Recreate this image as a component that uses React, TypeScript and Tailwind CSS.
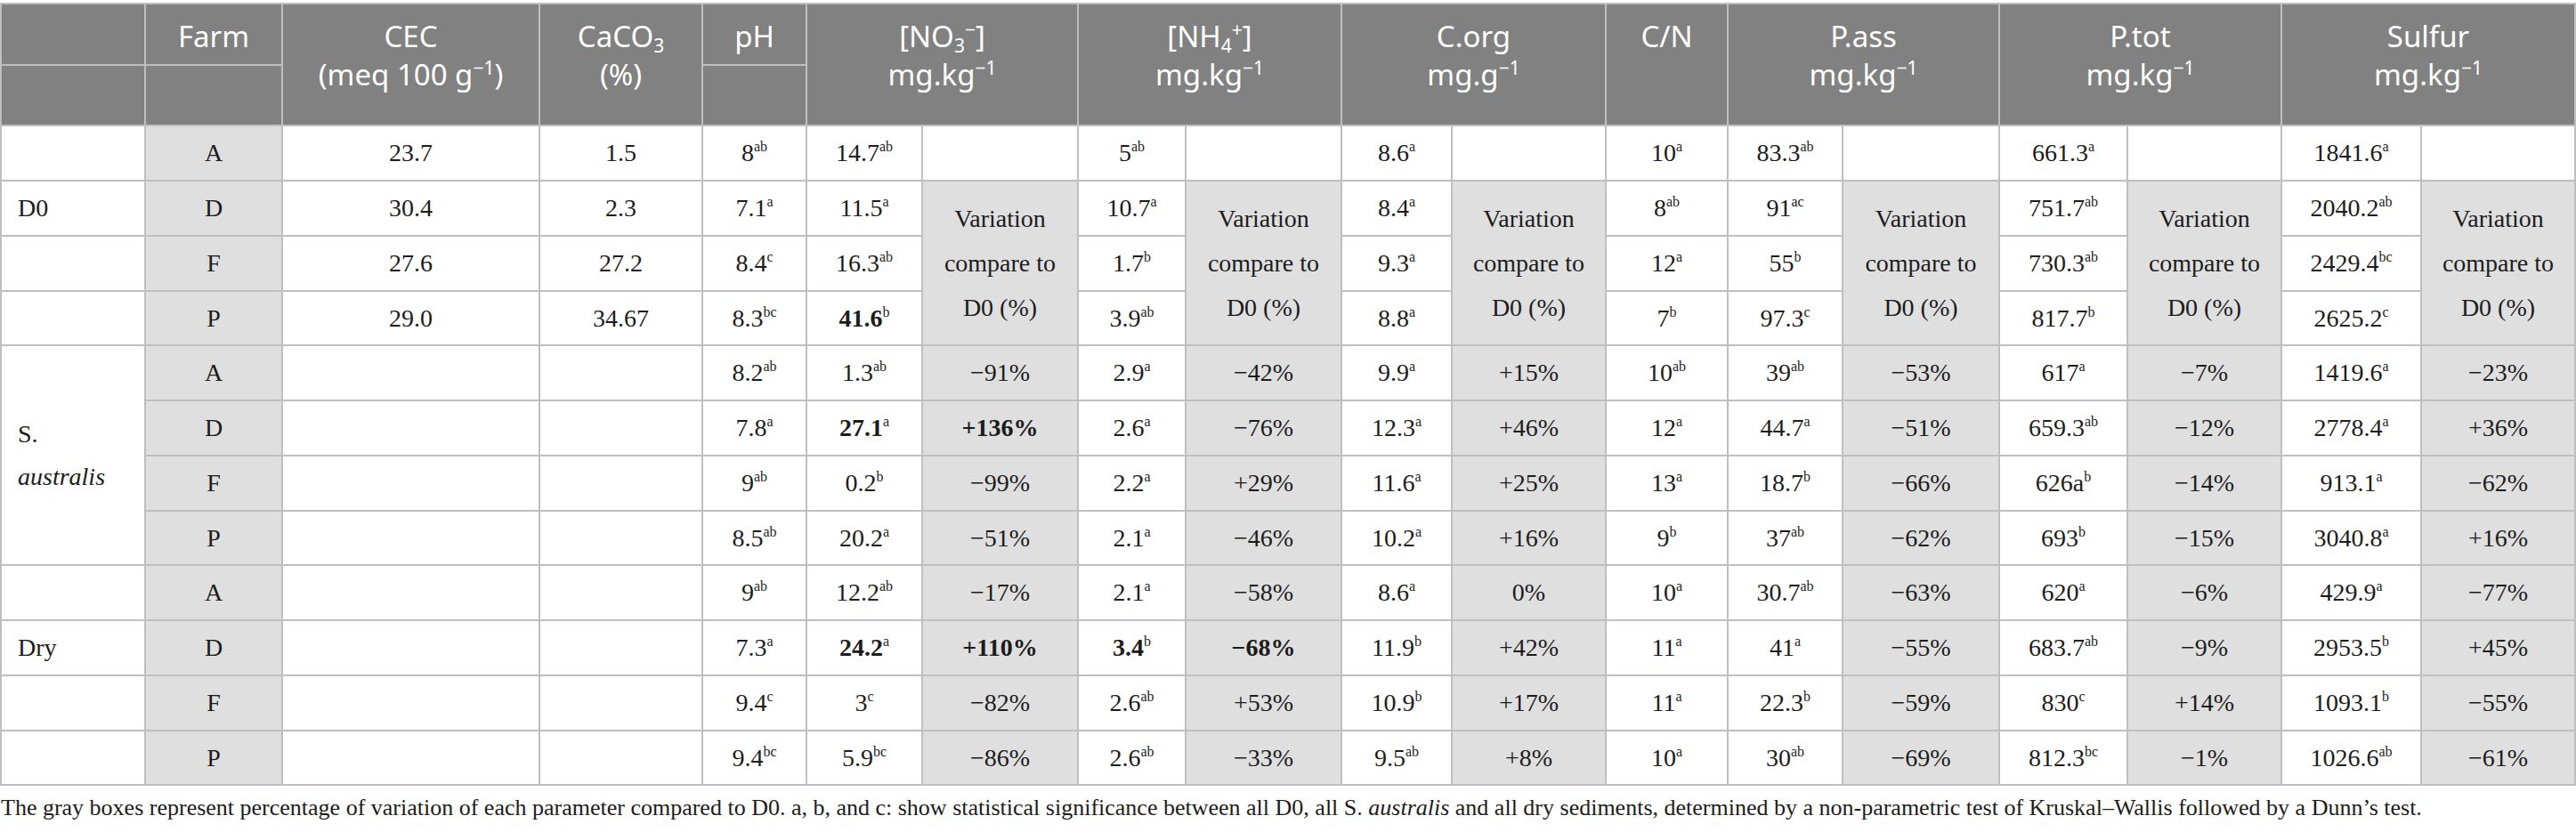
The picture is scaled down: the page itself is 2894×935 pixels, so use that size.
import React from 'react';

type Cell = string;

const d0Rows: { f: string; cec: string; ca: string; vals: Cell[] }[] = [
  { f: 'A', cec: '23.7', ca: '1.5', vals: ['8^ab', '14.7^ab', '5^ab', '8.6^a', '10^a', '83.3^ab', '661.3^a', '1841.6^a'] },
  { f: 'D', cec: '30.4', ca: '2.3', vals: ['7.1^a', '11.5^a', '10.7^a', '8.4^a', '8^ab', '91^ac', '751.7^ab', '2040.2^ab'] },
  { f: 'F', cec: '27.6', ca: '27.2', vals: ['8.4^c', '16.3^ab', '1.7^b', '9.3^a', '12^a', '55^b', '730.3^ab', '2429.4^bc'] },
  { f: 'P', cec: '29.0', ca: '34.67', vals: ['8.3^bc', '*41.6^b', '3.9^ab', '8.8^a', '7^b', '97.3^c', '817.7^b', '2625.2^c'] },
];

const saRows: { f: string; vals: Cell[] }[] = [
  { f: 'A', vals: ['8.2^ab', '1.3^ab', '−91%', '2.9^a', '−42%', '9.9^a', '+15%', '10^ab', '39^ab', '−53%', '617^a', '−7%', '1419.6^a', '−23%'] },
  { f: 'D', vals: ['7.8^a', '*27.1^a', '*+136%', '2.6^a', '−76%', '12.3^a', '+46%', '12^a', '44.7^a', '−51%', '659.3^ab', '−12%', '2778.4^a', '+36%'] },
  { f: 'F', vals: ['9^ab', '0.2^b', '−99%', '2.2^a', '+29%', '11.6^a', '+25%', '13^a', '18.7^b', '−66%', '626a^b', '−14%', '913.1^a', '−62%'] },
  { f: 'P', vals: ['8.5^ab', '20.2^a', '−51%', '2.1^a', '−46%', '10.2^a', '+16%', '9^b', '37^ab', '−62%', '693^b', '−15%', '3040.8^a', '+16%'] },
];

const dryRows: { f: string; vals: Cell[] }[] = [
  { f: 'A', vals: ['9^ab', '12.2^ab', '−17%', '2.1^a', '−58%', '8.6^a', '0%', '10^a', '30.7^ab', '−63%', '620^a', '−6%', '429.9^a', '−77%'] },
  { f: 'D', vals: ['7.3^a', '*24.2^a', '*+110%', '*3.4^b', '*−68%', '11.9^b', '+42%', '11^a', '41^a', '−55%', '683.7^ab', '−9%', '2953.5^b', '+45%'] },
  { f: 'F', vals: ['9.4^c', '3^c', '−82%', '2.6^ab', '+53%', '10.9^b', '+17%', '11^a', '22.3^b', '−59%', '830^c', '+14%', '1093.1^b', '−55%'] },
  { f: 'P', vals: ['9.4^bc', '5.9^bc', '−86%', '2.6^ab', '−33%', '9.5^ab', '+8%', '10^a', '30^ab', '−69%', '812.3^bc', '−1%', '1026.6^ab', '−61%'] },
];

const VAR_IDX = new Set([2, 4, 6, 9, 11, 13]);

function Val({ c }: { c: Cell }) {
  let s = c;
  let bold = false;
  if (s.startsWith('*')) {
    bold = true;
    s = s.slice(1);
  }
  const [main, sup] = s.split('^');
  return (
    <span className="whitespace-nowrap">
      <span className={bold ? 'font-bold' : ''}>{main}</span>
      {sup ? <sup className="text-[16px] font-normal top-[-11px]">{sup}</sup> : null}
    </span>
  );
}

function W({ children, className = '' }: { children?: React.ReactNode; className?: string }) {
  return <div className={`flex items-center justify-center bg-white ${className}`}>{children}</div>;
}

function G({ children, className = '' }: { children?: React.ReactNode; className?: string }) {
  return <div className={`flex items-center justify-center bg-[#e0dfe0] ${className}`}>{children}</div>;
}

function H({ children, className = '' }: { children?: React.ReactNode; className?: string }) {
  return (
    <div className={`flex flex-col items-center justify-start bg-[#808180] pt-[14px] text-white text-[33px] leading-[43px] font-['Noto_Sans',sans-serif] ${className}`}>
      {children}
    </div>
  );
}

const Unit = ({ pre }: { pre: string }) => (
  <span className="whitespace-nowrap">
    {pre}
    <sup className="text-[21px] top-[-12px]">−1</sup>
  </span>
);

function VarNote() {
  return (
    <G className="row-span-3 text-center leading-[50px]">
      <span>
        Variation
        <br />
        compare to
        <br />
        D0 (%)
      </span>
    </G>
  );
}

function TreatRow({ label, f, vals }: { label: React.ReactNode | null; f: string; vals: Cell[] }) {
  return (
    <>
      {label === null ? null : label}
      <G>{f}</G>
      <W />
      <W />
      {vals.map((v, i) =>
        VAR_IDX.has(i) ? (
          <G key={i}>
            <Val c={v} />
          </G>
        ) : (
          <W key={i}>
            <Val c={v} />
          </W>
        )
      )}
    </>
  );
}

export default function App() {
  return (
    <div className="w-[2894px] min-h-[935px] bg-white pt-[3px] text-[#1c1c1c] font-['Liberation_Serif','Times_New_Roman',serif] text-[28px]">
      <div className="grid grid-cols-[160px_152px_287px_181px_115px_128px_173px_119px_173px_122px_171px_135px_127px_174px_142px_171px_155px_171px] grid-rows-[67px_66px_60px_60px_60px_59px_60px_60px_60px_59px_60px_60px_60px_59px] gap-[2px] bg-[#bfbfbf] p-[2px]">
        {/* header row 1 */}
        <H />
        <H>Farm</H>
        <H className="row-span-2">
          <span>CEC</span>
          <span className="whitespace-nowrap">
            (meq 100 g<sup className="text-[21px] top-[-12px]">−1</sup>)
          </span>
        </H>
        <H className="row-span-2">
          <span className="whitespace-nowrap">
            CaCO<sub className="text-[21px] bottom-[-6px]">3</sub>
          </span>
          <span>(%)</span>
        </H>
        <H>pH</H>
        <H className="col-span-2 row-span-2">
          <span className="whitespace-nowrap">
            [NO<sub className="text-[21px] bottom-[-6px]">3</sub>
            <sup className="text-[21px] top-[-12px]">−</sup>]
          </span>
          <Unit pre="mg.kg" />
        </H>
        <H className="col-span-2 row-span-2">
          <span className="whitespace-nowrap">
            [NH<sub className="text-[21px] bottom-[-6px]">4</sub>
            <sup className="text-[21px] top-[-12px]">+</sup>]
          </span>
          <Unit pre="mg.kg" />
        </H>
        <H className="col-span-2 row-span-2">
          <span>C.org</span>
          <Unit pre="mg.g" />
        </H>
        <H className="row-span-2">C/N</H>
        <H className="col-span-2 row-span-2">
          <span>P.ass</span>
          <Unit pre="mg.kg" />
        </H>
        <H className="col-span-2 row-span-2">
          <span>P.tot</span>
          <Unit pre="mg.kg" />
        </H>
        <H className="col-span-2 row-span-2">
          <span>Sulfur</span>
          <Unit pre="mg.kg" />
        </H>
        {/* header row 2 */}
        <H />
        <H />
        <H />

        {/* D0 group */}
        {d0Rows.map((r, ri) => (
          <React.Fragment key={'d0' + ri}>
            {ri === 1 ? <W className="justify-start pl-[18px]">D0</W> : <W />}
            <G>{r.f}</G>
            <W>{r.cec}</W>
            <W>{r.ca}</W>
            <W>
              <Val c={r.vals[0]} />
            </W>
            <W>
              <Val c={r.vals[1]} />
            </W>
            {ri === 0 ? <W /> : ri === 1 ? <VarNote /> : null}
            <W>
              <Val c={r.vals[2]} />
            </W>
            {ri === 0 ? <W /> : ri === 1 ? <VarNote /> : null}
            <W>
              <Val c={r.vals[3]} />
            </W>
            {ri === 0 ? <W /> : ri === 1 ? <VarNote /> : null}
            <W>
              <Val c={r.vals[4]} />
            </W>
            <W>
              <Val c={r.vals[5]} />
            </W>
            {ri === 0 ? <W /> : ri === 1 ? <VarNote /> : null}
            <W>
              <Val c={r.vals[6]} />
            </W>
            {ri === 0 ? <W /> : ri === 1 ? <VarNote /> : null}
            <W>
              <Val c={r.vals[7]} />
            </W>
            {ri === 0 ? <W /> : ri === 1 ? <VarNote /> : null}
          </React.Fragment>
        ))}

        {/* S. australis group */}
        {saRows.map((r, ri) => (
          <TreatRow
            key={'sa' + ri}
            f={r.f}
            vals={r.vals}
            label={
              ri === 0 ? (
                <W className="row-span-4 justify-start pl-[18px] leading-[48px]">
                  <span>
                    S.
                    <br />
                    <i>australis</i>
                  </span>
                </W>
              ) : null
            }
          />
        ))}

        {/* Dry group */}
        {dryRows.map((r, ri) => (
          <TreatRow
            key={'dry' + ri}
            f={r.f}
            vals={r.vals}
            label={ri === 1 ? <W className="justify-start pl-[18px]">Dry</W> : <W />}
          />
        ))}
      </div>
      <p className="mt-[7px] pl-[1px] text-[26px] leading-[36px] whitespace-nowrap">
        The gray boxes represent percentage of variation of each parameter compared to D0. a, b, and c: show statistical
        significance between all D0, all S. <i>australis</i> and all dry sediments, determined by a non-parametric test of
        Kruskal–Wallis followed by a Dunn’s test.
      </p>
    </div>
  );
}
